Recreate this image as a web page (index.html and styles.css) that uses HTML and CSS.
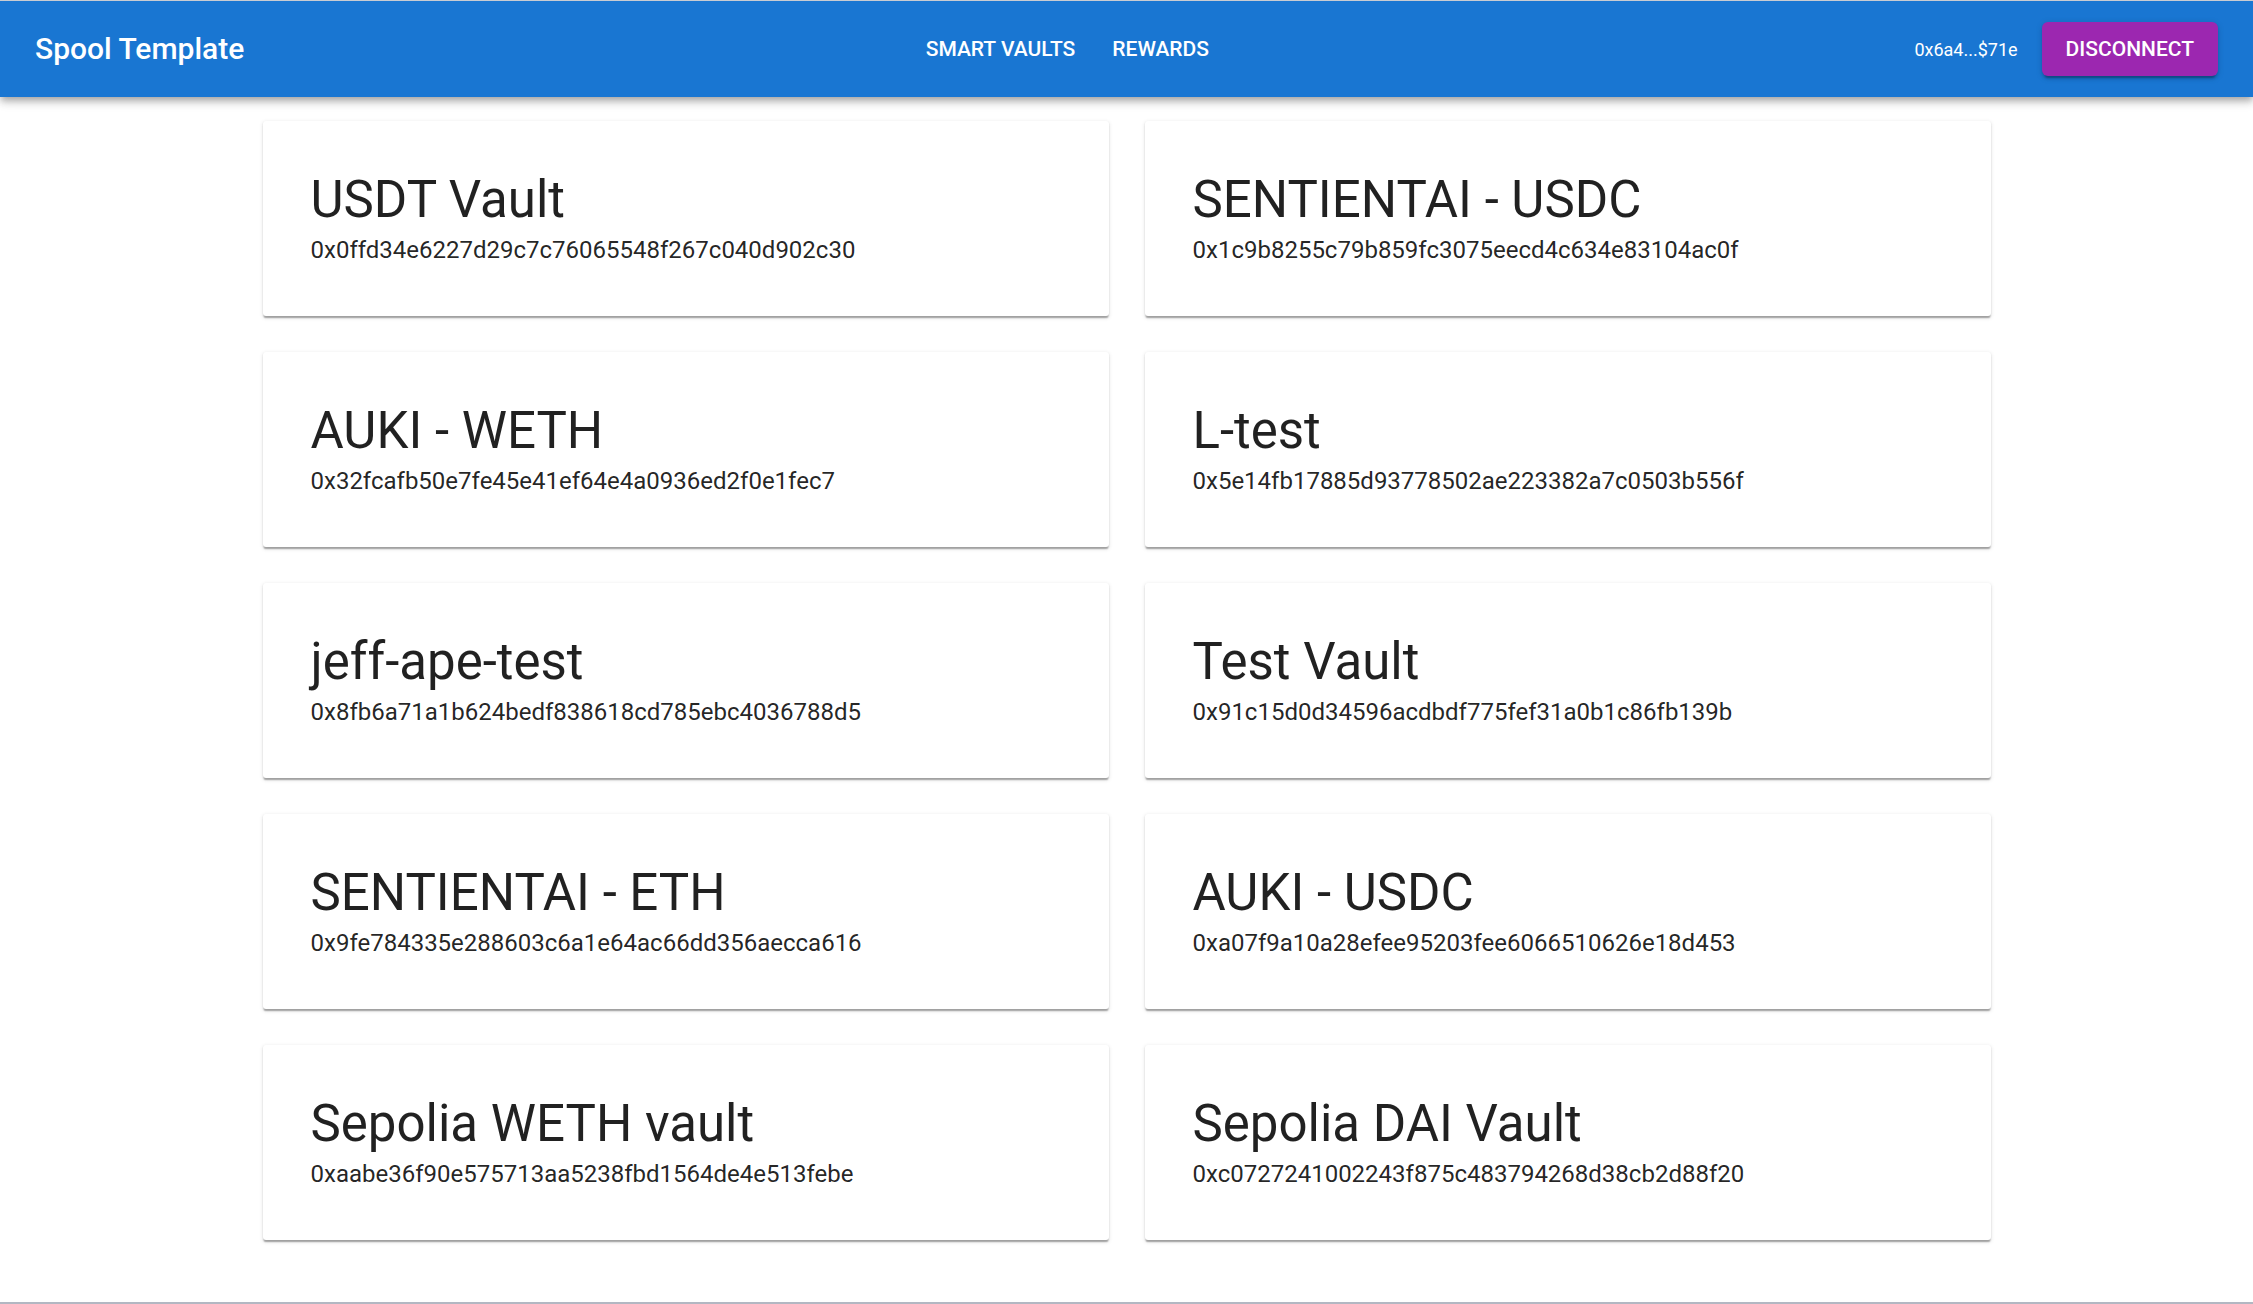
FILE: index.html
```html
<!DOCTYPE html>
<html lang="en">
<head>
<meta charset="utf-8">
<title>Spool Template</title>
<link rel="stylesheet" href="styles.css">
</head>
<body>
<header class="appbar">
  <div class="toolbar">
    <div class="brand">Spool Template</div>
    <nav class="nav">
      <a class="nav-btn">Smart Vaults</a>
      <a class="nav-btn">Rewards</a>
    </nav>
    <div class="account">
      <span class="address">0x6a4...$71e</span>
      <button class="disconnect">Disconnect</button>
    </div>
  </div>
</header>
<main class="container">
  <div class="grid">
    <div class="card"><div class="card-title">USDT Vault</div><div class="card-addr">0x0ffd34e6227d29c7c76065548f267c040d902c30</div></div>
    <div class="card"><div class="card-title">SENTIENTAI - USDC</div><div class="card-addr">0x1c9b8255c79b859fc3075eecd4c634e83104ac0f</div></div>
    <div class="card"><div class="card-title">AUKI - WETH</div><div class="card-addr">0x32fcafb50e7fe45e41ef64e4a0936ed2f0e1fec7</div></div>
    <div class="card"><div class="card-title">L-test</div><div class="card-addr">0x5e14fb17885d93778502ae223382a7c0503b556f</div></div>
    <div class="card"><div class="card-title">jeff-ape-test</div><div class="card-addr">0x8fb6a71a1b624bedf838618cd785ebc4036788d5</div></div>
    <div class="card"><div class="card-title">Test Vault</div><div class="card-addr">0x91c15d0d34596acdbdf775fef31a0b1c86fb139b</div></div>
    <div class="card"><div class="card-title">SENTIENTAI - ETH</div><div class="card-addr">0x9fe784335e288603c6a1e64ac66dd356aecca616</div></div>
    <div class="card"><div class="card-title">AUKI - USDC</div><div class="card-addr">0xa07f9a10a28efee95203fee6066510626e18d453</div></div>
    <div class="card"><div class="card-title">Sepolia WETH vault</div><div class="card-addr">0xaabe36f90e575713aa5238fbd1564de4e513febe</div></div>
    <div class="card"><div class="card-title">Sepolia DAI Vault</div><div class="card-addr">0xc0727241002243f875c483794268d38cb2d88f20</div></div>
  </div>
</main>
</body>
</html>
```

FILE: styles.css
```css
* { box-sizing: border-box; }
html, body { margin: 0; padding: 0; }
body {
  font-family: Roboto, "Liberation Sans", Arial, sans-serif;
  background: #ffffff;
  color: rgba(0,0,0,0.87);
  min-height: 100vh;
  border-top: 1px solid #c9ccd2;
  border-bottom: 2px solid #b3b7c2;
  display: flex;
  flex-direction: column;
}
.appbar {
  background: #1976d2;
  color: #fff;
  box-shadow: 0 3px 6px -1.5px rgba(0,0,0,0.2), 0 6px 7.5px 0 rgba(0,0,0,0.14), 0 1.5px 15px 0 rgba(0,0,0,0.12);
  position: relative;
  z-index: 2;
}
.toolbar {
  height: 96px;
  display: flex;
  align-items: center;
  padding: 0 35px 0 35px;
}
.brand {
  font-size: 30px;
  font-weight: 500;
  line-height: 1.6;
}
.nav {
  flex: 1;
  display: flex;
  justify-content: center;
  gap: 13px;
  padding-right: 24px;
}
.nav-btn {
  font-size: 21px;
  font-weight: 500;
  text-transform: uppercase;
  line-height: 1.75;
  padding: 9px 12px;
  color: #fff;
  cursor: pointer;
}
.account {
  display: flex;
  align-items: center;
  gap: 24px;
}
.address {
  font-size: 18px;
  font-weight: 400;
}
.disconnect {
  font-family: inherit;
  background: #9c27b0;
  color: #fff;
  border: 0;
  border-radius: 6px;
  font-size: 21px;
  font-weight: 500;
  text-transform: uppercase;
  line-height: 1.75;
  padding: 9px 24px;
  box-shadow: 0 4.5px 1.5px -3px rgba(0,0,0,0.2), 0 3px 3px 0 rgba(0,0,0,0.14), 0 1.5px 7.5px 0 rgba(0,0,0,0.12);
  cursor: pointer;
}
.container {
  flex: 1;
  width: 100%;
  max-width: 1800px;
  margin: 0 auto;
  padding: 24px 36px 36px;
}
.grid {
  display: grid;
  grid-template-columns: 1fr 1fr;
  gap: 36px;
}
.card {
  background: #fff;
  border-radius: 3px;
  padding: 48px 48px;
  height: 195px;
  box-shadow: 0 3px 1.5px -1.5px rgba(0,0,0,0.2), 0 1.5px 1.5px 0 rgba(0,0,0,0.14), 0 1.5px 4.5px 0 rgba(0,0,0,0.12);
}
.card-title {
  font-size: 51px;
  font-weight: 400;
  line-height: 1.235;
  color: rgba(0,0,0,0.87);
}
.card-addr {
  font-size: 24px;
  font-weight: 400;
  line-height: 1.5;
  color: rgba(0,0,0,0.87);
}
```
